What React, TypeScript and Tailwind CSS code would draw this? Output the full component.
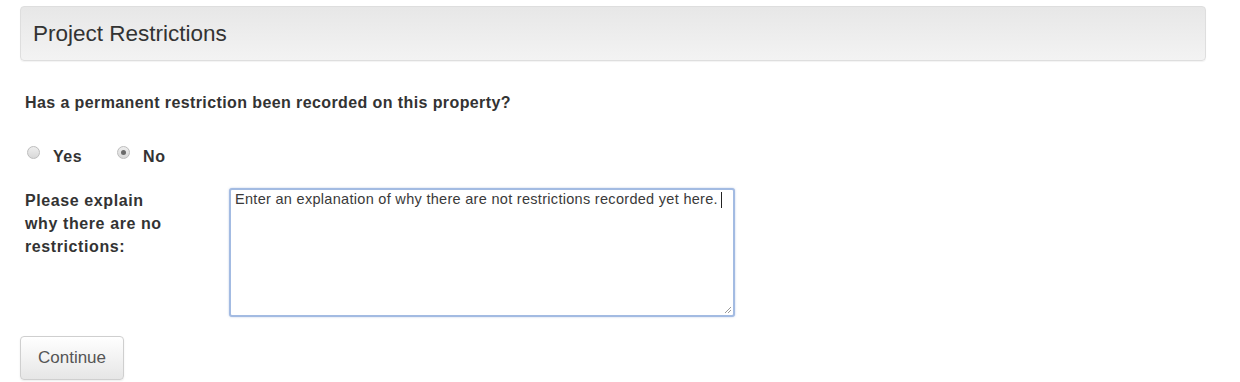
import React from "react";

export default function App() {
  return (
    <div className="w-[1240px] h-[382px] bg-white pl-[20px] pt-[6px]" style={{ fontFamily: '"Liberation Sans", Arial, sans-serif' }}>
      <div className="w-[1186px] h-[55px] rounded-[4px] border border-[#dedede] bg-gradient-to-b from-[#e7e7e7] to-[#f3f3f3] shadow-[0_1px_1px_rgba(0,0,0,0.05)] flex items-center pl-[12px] pt-[2px]">
        <h2 className="text-[22.5px] text-[#333] leading-none">Project Restrictions</h2>
      </div>
      <div className="pl-[5px]">
        <p className="mt-[33px] text-[16px] font-bold text-[#333] tracking-[0.4px] leading-[18px]">Has a permanent restriction been recorded on this property?</p>
        <div className="mt-[34px] flex items-start text-[16px] font-bold text-[#333] tracking-[0.5px] leading-[18px] pl-[2px]">
          <span className="w-[13px] h-[13px] rounded-full border border-[#bdbdbd] bg-gradient-to-b from-[#eeeeee] to-[#d8d8d8]"></span>
          <span className="ml-[13px] pt-[2px]">Yes</span>
          <span className="ml-[35px] w-[13px] h-[13px] rounded-full border border-[#bdbdbd] bg-gradient-to-b from-[#eeeeee] to-[#d8d8d8] flex items-center justify-center">
            <span className="w-[5px] h-[5px] rounded-full bg-[#6a6a6a]"></span>
          </span>
          <span className="ml-[13px] pt-[2px]">No</span>
        </div>
        <div className="mt-[22px] flex">
          <div className="w-[204px] text-[16px] font-bold text-[#333] leading-[23px] pt-[1px] tracking-[0.6px]">
            Please explain<br />why there are no<br />restrictions:
          </div>
          <div className="relative w-[506px] h-[129px] rounded-[3px] border-2 border-[#a3bbe2] bg-white px-[4px] pt-[1px] text-[14.5px] text-[#3a3a3a] leading-[17px] tracking-[0.3px] shadow-[0_0_2px_rgba(120,150,210,0.5)]">
            Enter an explanation of why there are not restrictions recorded yet here.
            <span className="inline-block w-[1px] h-[16px] bg-[#222] align-middle ml-[3px]"></span>
            <svg className="absolute right-[1px] bottom-[1px]" width="8" height="8" viewBox="0 0 8 8">
              <path d="M7 1L1 7M7 4L4 7" stroke="#999" strokeWidth="1" />
            </svg>
          </div>
        </div>
      </div>
      <button className="mt-[19px] w-[104px] h-[44px] rounded-[4px] border border-[#cfcfcf] bg-gradient-to-b from-white to-[#e6e6e6] text-[17px] text-[#555] shadow-[0_1px_2px_rgba(0,0,0,0.08)]">
        Continue
      </button>
    </div>
  );
}
